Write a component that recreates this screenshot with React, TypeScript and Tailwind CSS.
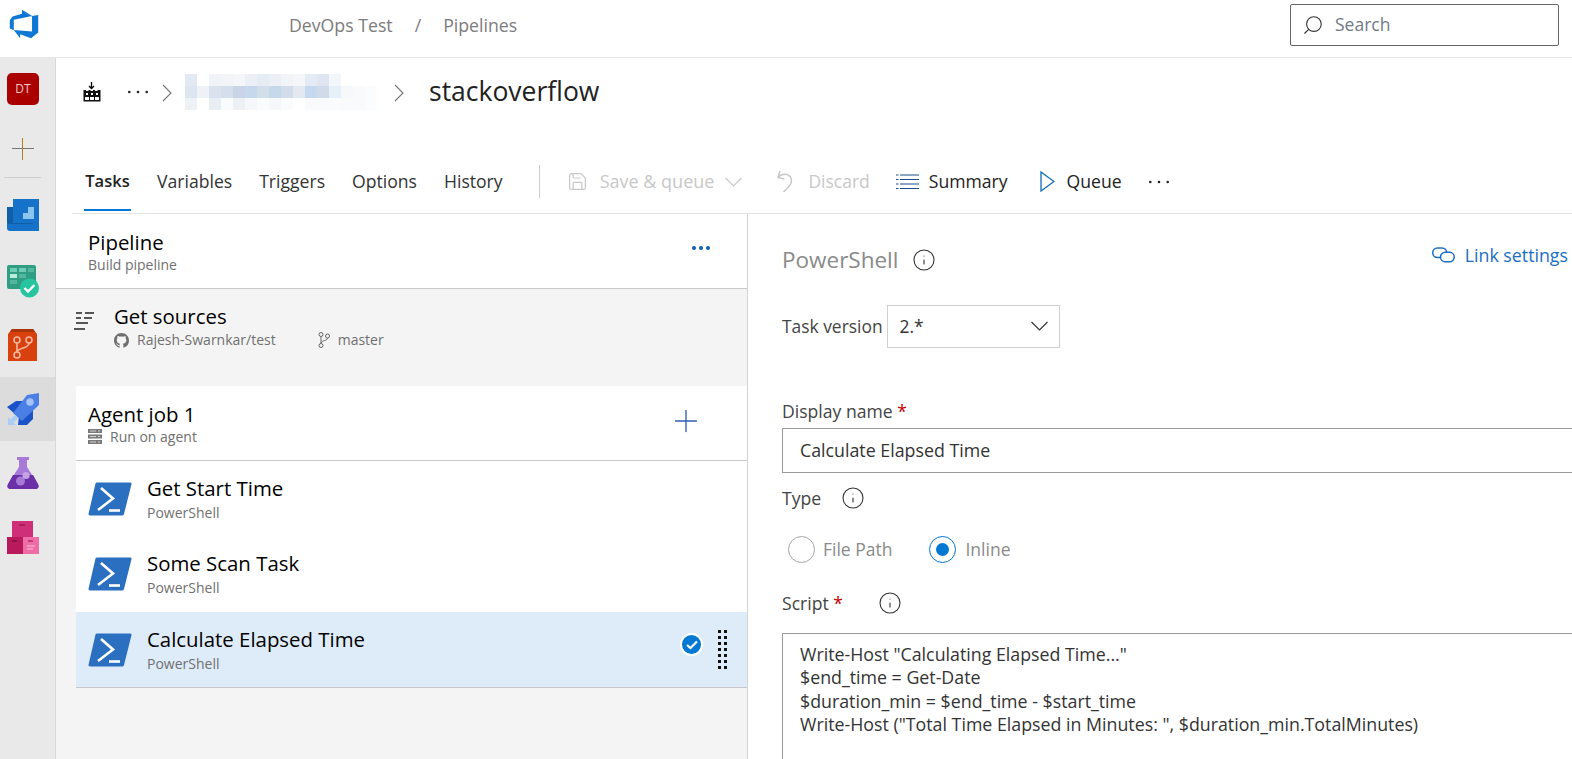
import { Plus, Search, Info, Save } from 'lucide-react';

const FONT = "font-['Open_Sans','Noto_Sans',sans-serif]";

function PowerShellIcon() {
  return (
    <svg width="44" height="36" viewBox="0 0 44 36" className="shrink-0">
      <path d="M9 1.5 H42 a1.5 1.5 0 0 1 1.4 2 L36 33 a2 2 0 0 1 -2 1.5 H2 a1.5 1.5 0 0 1 -1.4 -2 L7.5 2.5 a2 2 0 0 1 1.5 -1 Z" fill="#2a6fc0" />
      <path d="M13 7 L25 17.5 L10 29" fill="none" stroke="#fff" strokeWidth="2.6" />
      <path d="M21 29.5 H32" stroke="#fff" strokeWidth="2.6" />
    </svg>
  );
}

function AzureLogo() {
  return (
    <svg width="32" height="32" viewBox="0 0 18 18">
      <path d="M17 4v9.74l-4 3.28-6.2-2.26V17L3.29 12.41l10.23.8V4.44zM13.59 4.49L7.85 1v2.29L2.58 4.84 1 6.87v4.61l2.26 1V6.57z" fill="#0f78d4" />
    </svg>
  );
}

function BoardsIcon() {
  return (
    <svg width="33" height="33" viewBox="0 0 33 33">
      <rect x="0" y="0" width="29" height="24" rx="2" fill="#2f9e83" />
      <rect x="3" y="3" width="7" height="4" fill="#6fcbb4" />
      <rect x="12" y="3" width="7" height="4" fill="#6fcbb4" />
      <rect x="21" y="3" width="6" height="4" fill="#52b79e" />
      <rect x="3" y="9" width="7" height="4" fill="#b9ecdf" />
      <rect x="12" y="9" width="7" height="4" fill="#52b79e" />
      <rect x="3" y="15" width="7" height="4" fill="#52b79e" />
      <circle cx="22.5" cy="23" r="9.5" fill="#27c4a0" />
      <path d="M17.5 23 L21 26.5 L27.5 20" fill="none" stroke="#fff" strokeWidth="2.4" />
    </svg>
  );
}

function ReposIcon() {
  return (
    <svg width="30" height="32" viewBox="0 0 30 32" className="ml-[1px]">
      <path d="M4 0 H25 L29 5 V32 H0 V5 Z" fill="#d8400e" />
      <path d="M4 0 H25 L27 3 H2 Z" fill="#a83409" />
      <circle cx="9" cy="11" r="3" fill="none" stroke="#f7b8a0" strokeWidth="1.6" />
      <circle cx="21" cy="11" r="3" fill="none" stroke="#f7b8a0" strokeWidth="1.6" />
      <circle cx="9" cy="26" r="3" fill="none" stroke="#f7b8a0" strokeWidth="1.6" />
      <path d="M9 14 V23 M21 14 C21 20 11 18 9 23" fill="none" stroke="#f7b8a0" strokeWidth="1.6" />
    </svg>
  );
}

function PipelinesIcon() {
  return (
    <svg width="32" height="32" viewBox="0 0 32 32">
      <path d="M0 14 L9 8 H17 L8 21 Z" fill="#1b52c8" />
      <path d="M12 23 L26 14 V26 L20 32 H11 Z" fill="#1b52c8" />
      <path d="M6 20 L20 2 L32 0 V12 L15 28 Z" fill="#4a7fe6" />
      <circle cx="23" cy="9" r="3.8" fill="#a5c4f5" />
      <path d="M1 24 L1 32 H9 L6.5 29.5 L11 25 L8 22 L3.5 26.5 Z" fill="#a9cdf5" />
    </svg>
  );
}

function TestIcon() {
  return (
    <svg width="32" height="32" viewBox="0 0 32 32">
      <path d="M10 0 H22 V3 H20 V10 L31 27 C32.5 30 31 32 28 32 H4 C1 32 -0.5 30 1 27 L12 10 V3 H10 Z" fill="#a77ad8" />
      <path d="M6 18 H26 L31 27 C32.5 30 31 32 28 32 H4 C1 32 -0.5 30 1 27 Z" fill="#6b2fa8" />
      <circle cx="13.5" cy="24" r="4.5" fill="#a77ad8" />
      <circle cx="19" cy="18.5" r="3.6" fill="#c3a3e6" />
    </svg>
  );
}

function ArtifactsIcon() {
  return (
    <svg width="32" height="33" viewBox="0 0 32 33">
      <rect x="5" y="0" width="21" height="17" fill="#cf2f78" />
      <rect x="12" y="3" width="6" height="2" fill="#a81f5c" />
      <rect x="0" y="16" width="16" height="17" fill="#b81a5c" />
      <rect x="16" y="16" width="16" height="17" fill="#ee6da6" />
      <rect x="5" y="19" width="5" height="2" fill="#8c1245" />
      <rect x="21" y="19" width="5" height="2" fill="#c23c7c" />
      <path d="M20 25 H28 M20 28 H26" stroke="#f9c0d9" strokeWidth="1" />
    </svg>
  );
}

function OverviewIcon() {
  return (
    <svg width="32" height="32" viewBox="0 0 32 32">
      <path d="M6 0 H32 V32 H3 a3 3 0 0 1 -3 -3 V8 H6 Z" fill="#1672c9" />
      <path d="M0 8 H6 V24 H26 V25 H3 a3 3 0 0 1 -3 -3 Z" fill="#0f5eaa" />
      <path d="M11 20 H16 V14 H21 V8 H27 V20 Z" fill="#8cc4f0" />
    </svg>
  );
}

function BuildIcon() {
  return (
    <svg width="18" height="20" viewBox="0 0 18 20">
      <path d="M8.5 0 V6 M6 4 L8.5 6.5 L11 4" fill="none" stroke="#000" strokeWidth="1.3" />
      <rect x="0.5" y="8" width="17" height="11.5" fill="#111" />
      <path d="M3 7.5 h2.5 v1.5 h-2.5 Z M7.5 7.5 h2.5 v1.5 h-2.5 Z M12 7.5 h2.5 v1.5 h-2.5 Z" fill="#fff" />
      <path d="M3 11 h2 v2 h-2 Z M8 11 h2 v2 h-2 Z M13 11 h2 v2 h-2 Z M2 15 h4 v3 h-4 Z M7 15 h4 v3 h-4 Z M12 15 h4 v3 h-4 Z" fill="#fff" />
    </svg>
  );
}

function SourcesIcon() {
  return (
    <svg width="20" height="18" viewBox="0 0 20 18">
      <path d="M2 1 H8 M11 1 H20 M2 6 H7 M10 6 H18 M2 11 H14 M0 17 H11" stroke="#222" strokeWidth="1.3" />
    </svg>
  );
}

function ServerIcon() {
  return (
    <svg width="14" height="15" viewBox="0 0 14 15">
      <path d="M0 0 H14 V4 H0 Z M0 5.5 H14 V9.5 H0 Z M0 11 H14 V15 H0 Z" fill="#7a7a7a" />
      <path d="M2 2 H8 M10 2 H12 M2 7.5 H8 M10 7.5 H12 M2 13 H8 M10 13 H12" stroke="#e8e8e8" strokeWidth="0.8" />
    </svg>
  );
}

function GithubMark() {
  return (
    <svg width="15" height="15" viewBox="0 0 16 16">
      <path
        fill="#6e6e6e"
        d="M8 0C3.58 0 0 3.58 0 8c0 3.54 2.29 6.53 5.47 7.59.4.07.55-.17.55-.38 0-.19-.01-.82-.01-1.49-2.01.37-2.53-.49-2.69-.94-.09-.23-.48-.94-.82-1.13-.28-.15-.68-.52-.01-.53.63-.01 1.08.58 1.23.82.72 1.21 1.87.87 2.33.66.07-.52.28-.87.51-1.07-1.78-.2-3.64-.89-3.64-3.95 0-.87.31-1.59.82-2.15-.08-.2-.36-1.02.08-2.12 0 0 .67-.21 2.2.82.64-.18 1.32-.27 2-.27s1.36.09 2 .27c1.53-1.04 2.2-.82 2.2-.82.44 1.1.16 1.92.08 2.12.51.56.82 1.27.82 2.15 0 3.07-1.87 3.75-3.65 3.95.29.25.54.73.54 1.48 0 1.07-.01 1.93-.01 2.2 0 .21.15.46.55.38A8.01 8.01 0 0 0 16 8c0-4.42-3.58-8-8-8Z"
      />
    </svg>
  );
}

function BranchIcon() {
  return (
    <svg width="12" height="16" viewBox="0 0 12 16" fill="none" stroke="#666" strokeWidth="1">
      <circle cx="3" cy="2.5" r="2" />
      <circle cx="3" cy="13.5" r="2" />
      <circle cx="9.5" cy="4" r="2" />
      <path d="M3 4.5 V11.5 M9.5 6 C9.5 9 4 8 3 11" />
    </svg>
  );
}

function Dots({ color = '#222', radius = 1.3, width = 20 }: { color?: string; radius?: number; width?: number }) {
  return (
    <svg width={width} height="6" viewBox={`0 0 ${width} 6`}>
      <circle cx={radius} cy="3" r={radius} fill={color} />
      <circle cx={width / 2} cy="3" r={radius} fill={color} />
      <circle cx={width - radius} cy="3" r={radius} fill={color} />
    </svg>
  );
}

function Crumb() {
  return (
    <svg width="10" height="18" viewBox="0 0 10 18" className="mt-[2px]">
      <path d="M1 1 L9 9 L1 17" fill="none" stroke="#777" strokeWidth="1.1" />
    </svg>
  );
}

function Chev({ color }: { color: string }) {
  return (
    <svg width="17" height="10" viewBox="0 0 17 10">
      <path d="M0.5 1 L8.5 9 L16.5 1" fill="none" stroke={color} strokeWidth="1.2" />
    </svg>
  );
}

function UndoIcon() {
  return (
    <svg width="17" height="23" viewBox="0 0 17 23" fill="none" stroke="#c8c8c8" strokeWidth="1.5">
      <path d="M4 1 L2 7.5 L8.5 9" />
      <path d="M2 7.5 C7 2 15.5 4 15.5 11 C15.5 15 11 19 7.5 22" />
    </svg>
  );
}

function SummaryIcon() {
  return (
    <svg width="23" height="16" viewBox="0 0 23 16">
      <path d="M4 1 H23 M4 5.5 H23 M4 10 H23 M4 14.5 H23" stroke="#1c4f8c" strokeWidth="1.2" />
      <path d="M0 1 H2.5 M0 5.5 H2.5 M0 10 H2.5 M0 14.5 H2.5" stroke="#1c4f8c" strokeWidth="1.2" />
    </svg>
  );
}

function QueueIcon() {
  return (
    <svg width="15" height="21" viewBox="0 0 15 21">
      <path d="M1 1 L14 10.5 L1 20 Z" fill="none" stroke="#0f6cbd" strokeWidth="1.3" />
    </svg>
  );
}

function LinkIcon() {
  return (
    <svg width="23" height="16" viewBox="0 0 23 16" fill="none" stroke="#1a6fc4" strokeWidth="1.5" className="mr-[10px]">
      <path d="M8 10.5 H5.5 a4.7 4.7 0 0 1 0 -9.5 H10 a4.7 4.7 0 0 1 4.7 4.7" />
      <path d="M8.5 10 a4.7 4.7 0 0 1 4.7 -4.7 H17.5 a4.7 4.7 0 0 1 0 9.5 H13 a4.7 4.7 0 0 1 -4.5 -4.8" />
    </svg>
  );
}

// the blurred out project name in the breadcrumb
function BlurredName() {
  const cells: [number, number, string][] = [
    [0, 0, '#e3e9f2'], [2, 0, '#f0f3f7'], [3, 0, '#f2f4f8'], [4, 0, '#f5f6f9'], [5, 0, '#ecf0f6'], [6, 0, '#e6ecf4'], [7, 0, '#ecf0f6'], [8, 0, '#f2f4f8'], [9, 0, '#f5f6f9'], [10, 0, '#e5ebf4'], [11, 0, '#dfe6f1'], [12, 0, '#f3f6fa'],
    [0, 1, '#dde5f0'], [1, 1, '#eef1f6'], [2, 1, '#dbe2ee'], [3, 1, '#d5deec'], [4, 1, '#c9d5e6'], [5, 1, '#c6d9ec'], [6, 1, '#d3deeb'], [7, 1, '#c6d9ec'], [8, 1, '#d2dcea'], [9, 1, '#e3e8f1'], [10, 1, '#c5daee'], [11, 1, '#d0dae9'], [12, 1, '#e6f0f8'], [13, 1, '#f6f8fb'], [14, 1, '#f8fafc'], [15, 1, '#fbfcfd'],
    [0, 2, '#eef1f6'], [2, 2, '#e9edf4'], [3, 2, '#fafbfc'], [4, 2, '#edf1f6'], [5, 2, '#f5f7fa'], [6, 2, '#fafbfc'], [7, 2, '#f5f7fa'], [8, 2, '#fafbfc'], [10, 2, '#f8fafc'], [11, 2, '#f8fafc'], [12, 2, '#fafbfc'], [13, 2, '#f8fafc'], [14, 2, '#f8fafc'], [15, 2, '#fbfcfd'],
  ];
  return (
    <svg width="192" height="36" viewBox="0 0 192 36">
      {cells.map(([x, y, c]) => (
        <rect key={`${x}-${y}`} x={x * 12} y={y * 12} width="12" height="12" fill={c} />
      ))}
    </svg>
  );
}

function NavItem({ children, active, className }: { children: React.ReactNode; active?: boolean; className?: string }) {
  return (
    <div className={`h-16 flex items-center pl-[7px] w-full ${active ? 'bg-[#dcdcdc]' : ''} ${className ?? ''}`}>
      {children}
    </div>
  );
}

function TaskRow({ name, selected }: { name: string; selected?: boolean }) {
  return (
    <div className={`pl-[12px] pr-[20px] flex items-center ${selected ? 'h-[76px] bg-[#deecf9] border-b border-[#c8c8c8]' : 'h-[75.5px]'}`}>
      <PowerShellIcon />
      <div className="ml-[15px] flex-1">
        <div className="text-[20.4px] leading-[26px] text-black">{name}</div>
        <div className="mt-[2px] text-[14px] leading-[20px] text-[#707070]">PowerShell</div>
      </div>
      {selected && (
        <>
          <div className="w-[23px] h-[23px] rounded-full bg-[#0078d4] border-2 border-white flex items-center justify-center mr-[15px] mb-[10px]">
            <svg width="12" height="10" viewBox="0 0 12 10">
              <path d="M1 5 L4.5 8 L11 1.5" fill="none" stroke="#fff" strokeWidth="2.2" />
            </svg>
          </div>
          <div className="grid grid-cols-2 gap-x-[3px] gap-y-[3px]">
            {Array.from({ length: 14 }).map((_, i) => (
              <span key={i} className="w-[3px] h-[3px] bg-[#111]" />
            ))}
          </div>
        </>
      )}
    </div>
  );
}

function FieldInfo() {
  return <Info className="w-[24px] h-[24px] text-[#333]" strokeWidth={1.1} />;
}

export default function App() {
  return (
    <div className={`${FONT} w-[1572px] h-[759px] overflow-hidden bg-white flex flex-col text-[#333]`}>
      {/* Header */}
      <header className="h-[58px] shrink-0 border-b border-[#e6e6e6] flex items-center relative">
        <div className="w-[47px] flex justify-center mb-[10px]">
          <AzureLogo />
        </div>
        <div className="ml-[242px] flex items-center text-[17.7px] text-[#7c7c7c] mb-[6px]">
          <span>DevOps Test</span>
          <span className="mx-[22px]">/</span>
          <span>Pipelines</span>
        </div>
        <div className="ml-auto mr-[13px] mb-[8px] w-[269px] h-[42px] border border-[#666] rounded-[2px] flex items-center pl-[11px]">
          <Search className="w-[22px] h-[22px] text-[#333] -scale-x-100" strokeWidth={1.2} />
          <span className="ml-[11px] text-[17.5px] text-[#6f7a8a]">Search</span>
        </div>
      </header>

      <div className="flex-1 flex min-h-0">
        {/* Left nav */}
        <nav className="w-[56px] shrink-0 bg-[#e9e9e9] border-r border-[#d8d8d8] flex flex-col items-start pt-[15px]">
          <div className="ml-[7px] w-[32px] h-[32px] rounded-[5px] bg-[#ab0000] text-[#f3c9c9] text-[12px] flex items-center justify-center">DT</div>
          <div className="relative ml-[12px] w-[22px] h-[22px] mt-[33px]">
            <span className="absolute left-0 right-0 top-[10px] h-[1px] bg-[#777]" />
            <span className="absolute top-0 bottom-0 left-[10px] w-[1px] bg-[#b8801c]" />
          </div>
          <div className="ml-[4px] w-[37px] h-[1px] bg-[#cfcfcf] mt-[17px]" />
          <div className="ml-[7px] mt-[21px]"><OverviewIcon /></div>
          <NavItem className="mt-[18px]"><BoardsIcon /></NavItem>
          <NavItem><ReposIcon /></NavItem>
          <NavItem active><PipelinesIcon /></NavItem>
          <NavItem><TestIcon /></NavItem>
          <NavItem><ArtifactsIcon /></NavItem>
        </nav>

        <main className="flex-1 min-w-0 flex flex-col">
          {/* Breadcrumb */}
          <div className="h-[92px] shrink-0 pl-[27px] pt-[14px] flex items-start">
            <div className="flex items-center h-[40px]">
              <BuildIcon />
              <span className="ml-[27px] flex"><Dots /></span>
              <span className="ml-[14px] flex"><Crumb /></span>
              <div className="ml-[13px]"><BlurredName /></div>
              <span className="ml-[17px] flex"><Crumb /></span>
              <span className="ml-[25px] text-[26.5px] text-[#222] mb-[1px]">stackoverflow</span>
            </div>
          </div>

          {/* Tabs and toolbar */}
          <div className="h-[64px] shrink-0 ml-[16px] border-b border-[#e4e4e4] flex items-start text-[18px]">
            <div className="relative h-[61px] w-[47px] ml-[12px] flex items-center justify-center pt-[1px]">
              <span className="text-[16.5px] font-semibold text-[#222]">Tasks</span>
              <span className="absolute left-0 right-0 bottom-0 h-[2px] bg-[#0078d4]" />
            </div>
            <div className="h-[63px] ml-[26px] flex items-center gap-[27px] text-[17.6px] text-[#333]">
              <span>Variables</span>
              <span>Triggers</span>
              <span>Options</span>
              <span>History</span>
            </div>
            <div className="w-[1px] h-[33px] bg-[#ccc] ml-[36px] mt-[15px]" />
            <div className="h-[63px] ml-[27px] flex items-center">
              <Save className="w-[21px] h-[21px] text-[#c8c8c8]" strokeWidth={1.4} />
              <span className="ml-[12px] text-[#c8c8c8]">Save &amp; queue</span>
              <span className="ml-[11px] flex"><Chev color="#c8c8c8" /></span>
              <span className="ml-[34px] flex"><UndoIcon /></span>
              <span className="ml-[15px] text-[17.5px] text-[#c8c8c8]">Discard</span>
              <span className="ml-[26px] flex"><SummaryIcon /></span>
              <span className="ml-[10px] text-[17.6px] text-[#222]">Summary</span>
              <span className="ml-[32px] flex"><QueueIcon /></span>
              <span className="ml-[12px] text-[17.6px] text-[#222]">Queue</span>
              <span className="ml-[27px] flex"><Dots /></span>
            </div>
          </div>

          <div className="flex-1 flex min-h-0">
            {/* Pipeline tree */}
            <section className="w-[692px] shrink-0 bg-[#f4f4f4] border-r border-[#d4d4d4] flex flex-col">
              <div className="h-[75px] shrink-0 bg-white border-b border-[#c8c8c8] pl-[32px] pr-[37px] flex items-center">
                <div className="flex-1 pt-[1px]">
                  <div className="text-[20.4px] leading-[26px] text-black">Pipeline</div>
                  <div className="mt-[1px] text-[14px] leading-[18px] text-[#707070]">Build pipeline</div>
                </div>
                <span className="flex mb-[6px]"><Dots color="#0f5fb0" radius={2} width={18} /></span>
              </div>

              <div className="h-[97px] shrink-0 pl-[18px] pt-[14px] flex items-start">
                <div className="mt-[9px]"><SourcesIcon /></div>
                <div className="ml-[20px]">
                  <div className="text-[20.4px] leading-[26px] text-black">Get sources</div>
                  <div className="mt-[1px] flex items-center text-[14px] leading-[20px] text-[#707070]">
                    <GithubMark />
                    <span className="ml-[8px]">Rajesh-Swarnkar/test</span>
                    <span className="ml-[42px] flex"><BranchIcon /></span>
                    <span className="ml-[8px]">master</span>
                  </div>
                </div>
              </div>

              <div className="ml-[20px] bg-white flex flex-col">
                <div className="h-[75px] border-b border-[#c8c8c8] pl-[12px] pr-[43px] flex items-center">
                  <div className="flex-1">
                    <div className="text-[20.4px] leading-[26px] text-black">Agent job 1</div>
                    <div className="mt-[1px] flex items-center text-[14px] leading-[18px] text-[#707070]">
                      <ServerIcon />
                      <span className="ml-[8px]">Run on agent</span>
                    </div>
                  </div>
                  <Plus className="w-[36px] h-[36px] text-[#2f5fb5] mb-[4px]" strokeWidth={0.9} />
                </div>
                <TaskRow name="Get Start Time" />
                <TaskRow name="Some Scan Task" />
                <TaskRow name="Calculate Elapsed Time" selected />
              </div>
            </section>

            {/* Task details */}
            <section className="flex-1 min-w-0 pl-[34px] flex flex-col">
              <div className="flex items-start justify-between mt-[29px]">
                <div className="flex items-center">
                  <span className="text-[22.5px] text-[#8a8a8a]">PowerShell</span>
                  <Info className="ml-[14px] w-[24px] h-[24px] text-[#333]" strokeWidth={1.1} />
                </div>
                <div className="flex items-center text-[#1a6fc4] text-[17.8px] mr-[4px] -mt-[1px]">
                  <LinkIcon />
                  <span>Link settings</span>
                </div>
              </div>

              <div className="flex items-center mt-[28px]">
                <span className="text-[17.4px] text-[#444]">Task version</span>
                <div className="ml-[4px] w-[173px] h-[43px] border border-[#d0d0d0] flex items-center justify-between pl-[12px] pr-[11px]">
                  <span className="text-[17.4px] text-[#333]">2.*</span>
                  <Chev color="#333" />
                </div>
              </div>

              <div className="mt-[52px] text-[17.6px] leading-[22px] text-[#444]">
                Display name <span className="text-[#c80000]">*</span>
              </div>
              <div className="mt-[6px] -mr-[6px] h-[45px] border border-[#9a9a9a] pl-[17px] flex items-center text-[17.8px] text-[#333]">
                Calculate Elapsed Time
              </div>

              <div className="flex items-center mt-[12px] h-[26px]">
                <span className="text-[17.6px] text-[#444]">Type</span>
                <span className="ml-[20px] flex"><FieldInfo /></span>
              </div>

              <div className="flex items-center mt-[25px] ml-[6px] text-[17.5px] text-[#8a8a8a]">
                <span className="w-[27px] h-[27px] rounded-full border border-[#a6a6a6]" />
                <span className="ml-[8px]">File Path</span>
                <span className="ml-[37px] w-[27px] h-[27px] rounded-full border border-[#0078d4] flex items-center justify-center">
                  <span className="w-[13px] h-[13px] rounded-full bg-[#0078d4]" />
                </span>
                <span className="ml-[9px]">Inline</span>
              </div>

              <div className="flex items-center mt-[27px] h-[26px]">
                <span className="text-[17.6px] text-[#444]">Script <span className="text-[#c80000]">*</span></span>
                <span className="ml-[35px] flex"><FieldInfo /></span>
              </div>

              <div className="mt-[17px] -mr-[6px] flex-1 border border-[#9a9a9a] border-b-0 pl-[17px] pt-[9px] text-[17.8px] leading-[23.5px] text-[#333]">
                <div>Write-Host "Calculating Elapsed Time..."</div>
                <div>$end_time = Get-Date</div>
                <div>$duration_min = $end_time - $start_time</div>
                <div>Write-Host ("Total Time Elapsed in Minutes: ", $duration_min.TotalMinutes)</div>
              </div>
            </section>
          </div>
        </main>
      </div>
    </div>
  );
}
